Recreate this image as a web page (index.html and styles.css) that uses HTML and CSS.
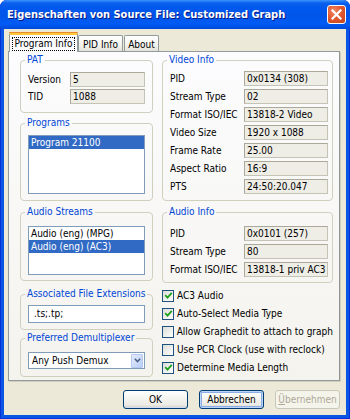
FILE: index.html
```html
<!DOCTYPE html>
<html>
<head>
<meta charset="utf-8">
<link rel="stylesheet" href="styles.css">
</head>
<body>
<div class="window">
  <div class="titlebar">
    <span class="title">Eigenschaften von Source File: Customized Graph</span>
    <span class="close"><svg width="11" height="11" viewBox="0 0 11 11"><path d="M1.5 1.5 L9.5 9.5 M9.5 1.5 L1.5 9.5" stroke="#fff" stroke-width="2.2" stroke-linecap="square"/></svg></span>
  </div>
  <div class="client">
    <div class="tabs">
      <div class="tab active"><span class="focus">Program Info</span></div>
      <div class="tab pid">PID Info</div>
      <div class="tab about">About</div>
    </div>
    <div class="panel">
      <div class="col left">
        <fieldset class="group pat">
          <legend>PAT</legend>
          <div class="rows">
            <div class="row"><span class="lbl">Version</span><span class="ro">5</span></div>
            <div class="row"><span class="lbl">TID</span><span class="ro">1088</span></div>
          </div>
        </fieldset>
        <fieldset class="group programs">
          <legend>Programs</legend>
          <div class="list prog-list">
            <div class="item sel">Program 21100</div>
          </div>
        </fieldset>
        <fieldset class="group streams">
          <legend>Audio Streams</legend>
          <div class="list stream-list">
            <div class="item">Audio (eng) (MPG)</div>
            <div class="item sel">Audio (eng) (AC3)</div>
          </div>
        </fieldset>
        <fieldset class="group assoc">
          <legend>Associated File Extensions</legend>
          <div class="edit">.ts;.tp;</div>
        </fieldset>
        <fieldset class="group demux">
          <legend>Preferred Demultiplexer</legend>
          <div class="combo"><span class="combo-text">Any Push Demux</span><span class="combo-btn"><svg width="7" height="5" viewBox="0 0 7 5"><path d="M0.8 0.8 L3.5 3.5 L6.2 0.8" fill="none" stroke="#4D6185" stroke-width="1.6"/></svg></span></div>
        </fieldset>
      </div>
      <div class="col right">
        <fieldset class="group video">
          <legend>Video Info</legend>
          <div class="rows wide">
            <div class="row"><span class="lbl">PID</span><span class="ro">0x0134 (308)</span></div>
            <div class="row"><span class="lbl">Stream Type</span><span class="ro">02</span></div>
            <div class="row"><span class="lbl">Format ISO/IEC</span><span class="ro">13818-2 Video</span></div>
            <div class="row"><span class="lbl">Video Size</span><span class="ro">1920 x 1088</span></div>
            <div class="row"><span class="lbl">Frame Rate</span><span class="ro">25.00</span></div>
            <div class="row"><span class="lbl">Aspect Ratio</span><span class="ro">16:9</span></div>
            <div class="row"><span class="lbl">PTS</span><span class="ro">24:50:20.047</span></div>
          </div>
        </fieldset>
        <fieldset class="group audio">
          <legend>Audio Info</legend>
          <div class="rows wide">
            <div class="row"><span class="lbl">PID</span><span class="ro">0x0101 (257)</span></div>
            <div class="row"><span class="lbl">Stream Type</span><span class="ro">80</span></div>
            <div class="row"><span class="lbl">Format ISO/IEC</span><span class="ro">13818-1 priv AC3</span></div>
          </div>
        </fieldset>
        <div class="checks">
          <div class="check"><span class="box on"><svg width="9" height="9" viewBox="0 0 9 9"><path d="M1.2 4.2 L3.5 6.6 L7.8 1.8" fill="none" stroke="#21A121" stroke-width="1.8"/></svg></span>AC3 Audio</div>
          <div class="check"><span class="box on"><svg width="9" height="9" viewBox="0 0 9 9"><path d="M1.2 4.2 L3.5 6.6 L7.8 1.8" fill="none" stroke="#21A121" stroke-width="1.8"/></svg></span>Auto-Select Media Type</div>
          <div class="check"><span class="box"></span>Allow Graphedit to attach to graph</div>
          <div class="check"><span class="box"></span>Use PCR Clock (use with reclock)</div>
          <div class="check"><span class="box on"><svg width="9" height="9" viewBox="0 0 9 9"><path d="M1.2 4.2 L3.5 6.6 L7.8 1.8" fill="none" stroke="#21A121" stroke-width="1.8"/></svg></span>Determine Media Length</div>
        </div>
      </div>
    </div>
    <div class="buttons">
      <div class="btn ok">OK</div>
      <div class="btn cancel">Abbrechen</div>
      <div class="btn disabled"><span class="ul">Ü</span>bernehmen</div>
    </div>
  </div>
</div>
</body>
</html>
```
FILE: styles.css
```css
html, body {
  margin: 0;
  padding: 0;
  background: #ffffff;
}
body {
  width: 350px;
  height: 419px;
  overflow: hidden;
  font-family: "DejaVu Sans Condensed", "DejaVu Sans", sans-serif;
  font-stretch: condensed;
  font-size: 10px;
  color: #000;
}
.window {
  width: 350px;
  height: 419px;
  box-sizing: border-box;
  border-radius: 7px 7px 0 0;
  background: #0A56E4;
  display: flex;
  flex-direction: column;
  overflow: hidden;
  box-shadow: inset 1px 0 0 #0831D9, inset -1px 0 0 #0831D9, inset 0 -1px 0 #0831D9;
}
.titlebar {
  height: 29px;
  flex: none;
  display: flex;
  align-items: center;
  justify-content: space-between;
  padding: 0 4px 0 7px;
  background: linear-gradient(to bottom, #3D95FF 0px, #0A60EB 3px, #0058EE 8px, #0055E8 16px, #005BF5 24px, #0049D8 29px);
  border-radius: 7px 7px 0 0;
}
.title {
  color: #fff;
  font-family: "DejaVu Sans Condensed", "DejaVu Sans", sans-serif;
  font-weight: bold;
  font-size: 11px;
  letter-spacing: 0;
  text-shadow: 1px 1px 0 #0A1883;
  white-space: nowrap;
}
.close {
  width: 19px;
  height: 19px;
  box-sizing: border-box;
  border: 1px solid #fff;
  border-radius: 3px;
  background: radial-gradient(circle at 35% 30%, #F08A68 0%, #E35A30 45%, #C2411B 100%);
  display: flex;
  align-items: center;
  justify-content: center;
  margin-top: -1px;
}
.client {
  flex: 1;
  margin: 0 4px 4px 4px;
  background: #ECE9D8;
  display: flex;
  flex-direction: column;
}
.tabs {
  display: flex;
  align-items: flex-end;
  height: 19px;
  margin-top: 3px;
  padding-left: 5px;
  position: relative;
  z-index: 2;
}
.tab {
  box-sizing: border-box;
  height: 16px;
  border: 1px solid #919B9C;
  border-bottom: none;
  border-radius: 2px 2px 0 0;
  background: linear-gradient(to bottom, #FFFFFF, #F3F3EF 60%, #E3E2DA);
  display: flex;
  align-items: center;
  justify-content: center;
  font-size: 10px;
  padding-top: 1px;
}
.tab.active {
  width: 69px;
  background: #FCFCFE;
  border-top: 3px solid #FFC73C;
  padding-top: 0;
  position: relative;
  top: 1px;
  height: 20px;
}
.tab.active::before {
  content: "";
  position: absolute;
  left: -1px;
  right: -1px;
  top: -3px;
  height: 1px;
  background: #E68B2C;
  border-radius: 2px 2px 0 0;
}
.focus {
  border: 1px dotted #000;
  padding: 0 2px;
  line-height: 12px;
}
.tab.pid {
  width: 45px;
}
.tab.about {
  width: 35px;
  margin-left: 1px;
}
.panel {
  box-sizing: border-box;
  width: 332px;
  height: 330px;
  margin-left: 4px;
  border: 1px solid #919B9C;
  border-right-color: #8D9595;
  background: linear-gradient(to bottom, #FCFCFE, #F4F3EE);
  display: flex;
  padding: 2px 0 0 11px;
  gap: 9px;
  box-shadow: 1px 1px 0 #D0CEBF;
}
.col {
  display: flex;
  flex-direction: column;
}
.col.left {
  width: 133px;
}
.col.right {
  width: 171px;
}
.group {
  box-sizing: border-box;
  margin: 0;
  padding: 0 0 0 7px;
  border: 1px solid #D0D0BF;
  border-radius: 4px;
  min-width: 0;
}
.group legend {
  color: #0046D5;
  font-size: 10px;
  line-height: 12px;
  padding: 0 2px;
  margin-left: -3px;
}
.pat { height: 59px; }
.pat .rows { padding-top: 6px; gap: 2px; }
.programs { height: 84px; margin-top: 4px; }
.programs .list { margin-top: 6px; height: 59px; }
.streams { height: 75px; margin-top: 5px; }
.streams .list { margin-top: 8px; height: 49px; }
.assoc { height: 42px; margin-top: 7px; }
.assoc .edit { margin-top: 5px; }
.demux { height: 45px; margin-top: 2px; }
.demux .combo { margin-top: 8px; }
.video { height: 147px; }
.video .rows { padding-top: 5px; gap: 3px; }
.audio { height: 77px; margin-top: 5px; }
.audio .rows { padding-top: 8px; gap: 3px; }

.rows {
  display: flex;
  flex-direction: column;
}
.row {
  display: flex;
  align-items: center;
  height: 15px;
}
.lbl {
  width: 42px;
  white-space: nowrap;
}
.rows.wide .lbl {
  width: 74px;
}
.ro {
  box-sizing: border-box;
  height: 15px;
  width: 75px;
  border: 1px solid #C5C3B6;
  border-top-color: #ACA899;
  border-left-color: #ACA899;
  background: #EEEDE6;
  padding-left: 2px;
  line-height: 13px;
  white-space: nowrap;
  overflow: hidden;
}
.rows.wide .ro {
  width: 84px;
}
.list {
  box-sizing: border-box;
  width: 117px;
  border: 1px solid #7F9DB9;
  background: #fff;
  padding: 0;
}
.item {
  height: 13px;
  line-height: 13px;
  padding-left: 2px;
  white-space: nowrap;
}
.item.sel {
  background: #316AC5;
  color: #fff;
}
.edit {
  box-sizing: border-box;
  width: 117px;
  height: 18px;
  border: 1px solid #7F9DB9;
  background: #fff;
  padding-left: 5px;
  line-height: 16px;
}
.combo {
  box-sizing: border-box;
  width: 117px;
  height: 17px;
  border: 1px solid #7F9DB9;
  background: #fff;
  display: flex;
  align-items: center;
  justify-content: space-between;
  padding: 0 1px 0 3px;
}
.combo-btn {
  box-sizing: border-box;
  width: 12px;
  height: 14px;
  border: 1px solid #B5C9F3;
  border-radius: 1px;
  background: linear-gradient(to bottom right, #E4ECFD, #BACDF7);
  display: flex;
  align-items: center;
  justify-content: center;
}
.checks {
  display: flex;
  flex-direction: column;
  gap: 5px;
  margin-top: 6px;
}
.check {
  display: flex;
  align-items: center;
  height: 13px;
  white-space: nowrap;
}
.box {
  box-sizing: border-box;
  width: 12px;
  height: 12px;
  border: 1px solid #1C5180;
  background: linear-gradient(to bottom right, #DCDCD7, #FFFFFF);
  margin-right: 3px;
  display: flex;
  align-items: center;
  justify-content: center;
}
.buttons {
  display: flex;
  justify-content: flex-end;
  gap: 11px;
  margin-top: 9px;
  padding-right: 6px;
}
.btn {
  box-sizing: border-box;
  width: 65px;
  height: 19px;
  border: 1px solid #003C74;
  border-radius: 3px;
  background: linear-gradient(to bottom, #FFFFFF, #F4F4F0 40%, #ECEBE6 80%, #D6D0C5);
  display: flex;
  align-items: center;
  justify-content: center;
  font-size: 10px;
}
.btn.ok {
  box-shadow: inset 0 -1px 0 #CFDBF2;
}
.btn.cancel {
  box-shadow: inset 0 0 0 1px #BCD4F6, inset 0 0 0 2px #89ADE4;
}
.btn.disabled {
  border-color: #C9C7BA;
  background: #F5F4EA;
  color: #ACA899;
}
.ul {
  text-decoration: underline;
}
```
